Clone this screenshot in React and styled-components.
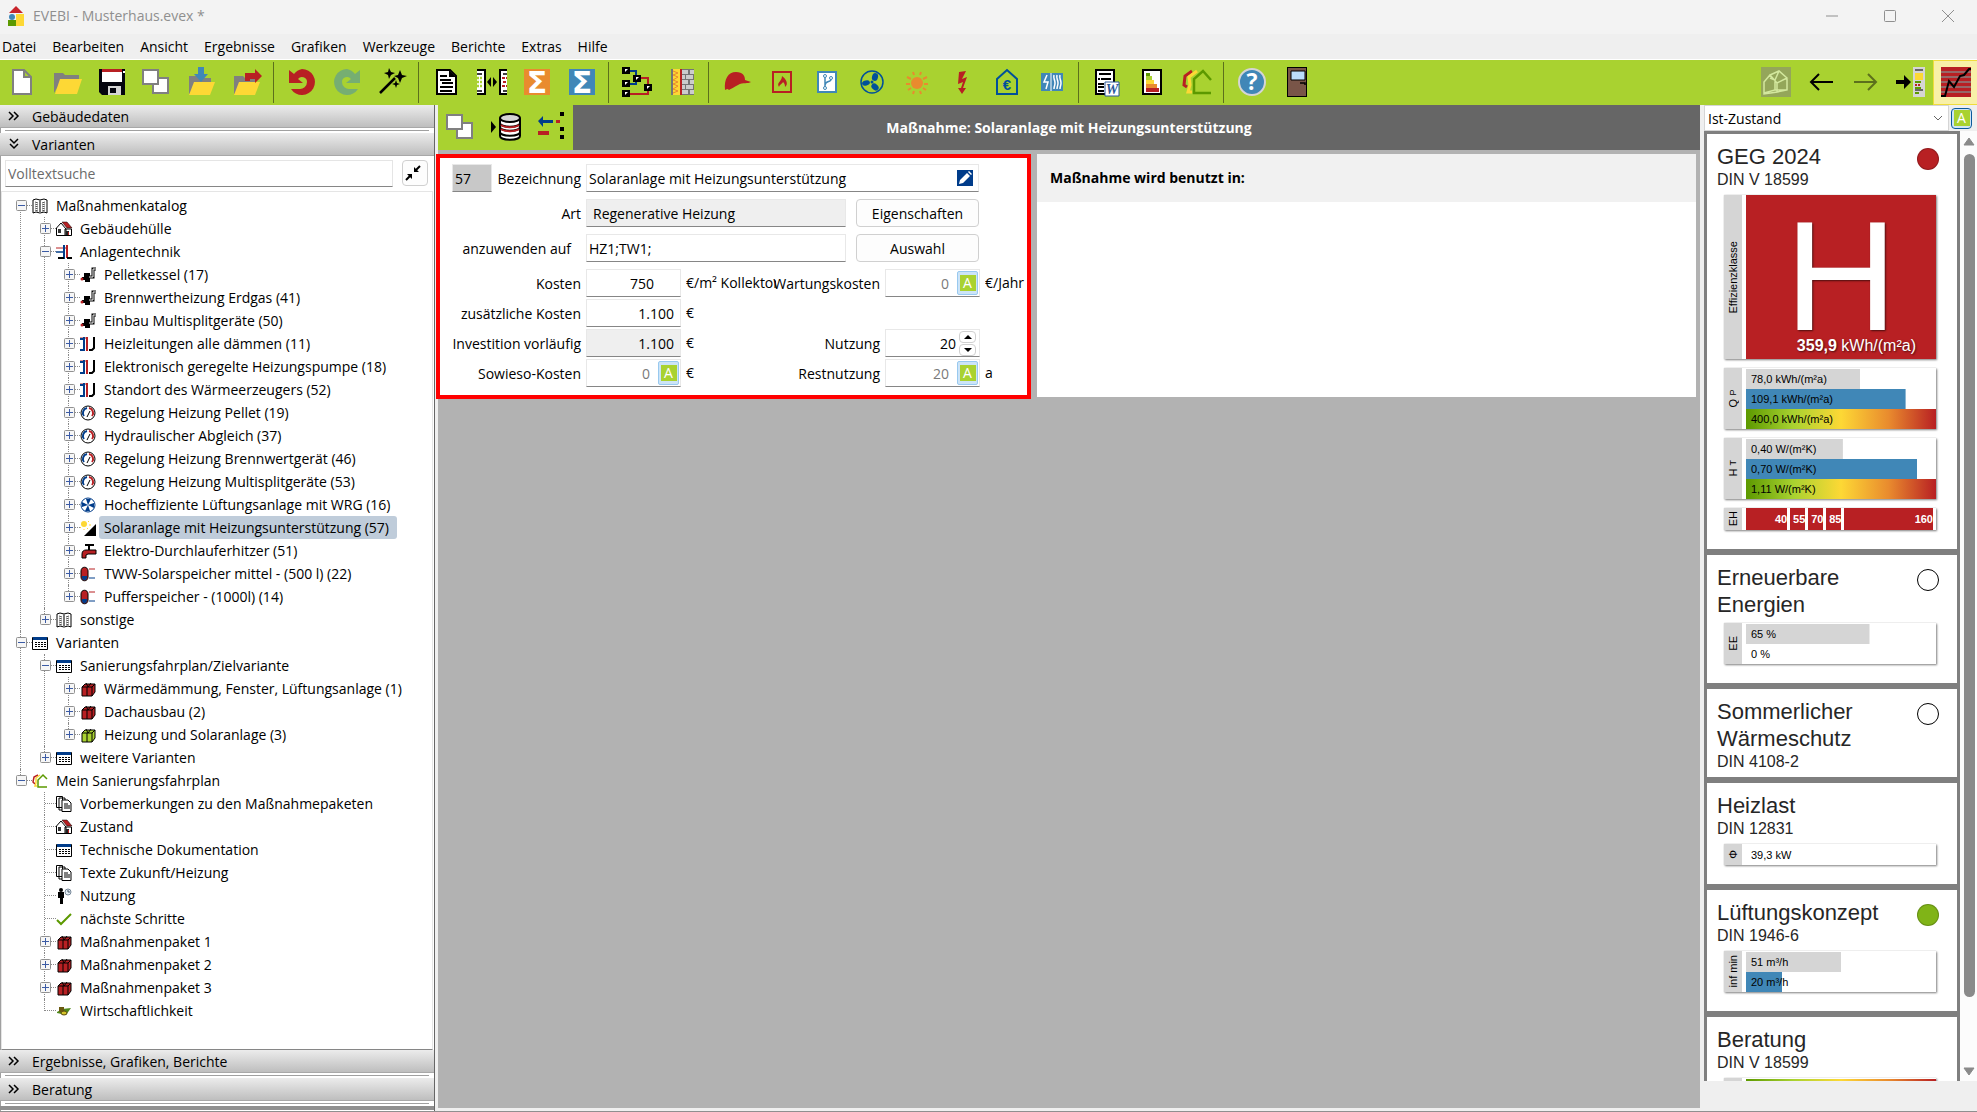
import { useState } from "react";
import styled, { createGlobalStyle, css } from "styled-components";

const green = "#a9d230";
const red = "#b82023";
const blue = "#4087b7";
const navy = "#003c8a";
const grey = "#b2b2b2";
const darkGrey = "#666666";
const yellow = "#fdd835";
const black = "#000000";
const white = "#ffffff";
const orange = "#e98b2e";

/* ---------- toolbar icons, 30 x 30 ---------- */

const toolIcons = {
  newFile: (
    <path d="M6 3h11l7 7v17H6z M17 3v7h7" fill={white} stroke="#808080" strokeWidth="2" />
  ),
  open: (
    <>
      <path d="M2 26V6h9l2 2h14v8H8z" fill="#808080" />
      <path d="M8 12h22l-5 15H3z" fill={yellow} />
    </>
  ),
  save: (
    <>
      <path d="M2 2h26v26H5l-3-3z" fill="#05050f" />
      <path d="M5 2h20v13H5z" fill={white} />
      <path d="M5 2h20v3H5z" fill={red} />
      <path d="M11 19h13v9H11z" fill="#d5d5d5" />
      <path d="M13 21h6v5h-6z" fill="#05050f" />
      <path d="M26 4h2v2h-2z" fill={white} />
    </>
  ),
  copies: (
    <g fill={white} stroke="#808080" strokeWidth="2">
      <path d="M11 11h15v15H11z" />
      <path d="M1 3h15v14H1z" />
    </g>
  ),
  importFile: (
    <>
      <path d="M2 27V9h9l2 2h11v8z" fill="#808080" />
      <path d="M7 15h21l-5 13H2z" fill={yellow} />
      <path d="M11 0h6v7h4l-7 8-7-8h4z" fill={blue} />
    </>
  ),
  exportFile: (
    <>
      <path d="M2 27V9h9l2 2h11v8z" fill="#808080" />
      <path d="M7 15h21l-5 13H2z" fill={yellow} />
      <path d="M13 14V6h10V2l7 7-7 7v-4h-5v2z" fill={red} />
    </>
  ),
  undo: (
    <path d="M15 2a13 13 0 1 1-11 20h8a7 7 0 0 0 8-7 5 5 0 0 0-9-3l5 4H2V3l5 4a13 13 0 0 1 8-5z" fill={red} />
  ),
  redo: (
    <path d="M15 2a13 13 0 1 0 11 20h-8a7 7 0 0 1-8-7 5 5 0 0 1 9-3l-5 4h14V3l-5 4a13 13 0 0 0-8-5z" fill="#76ae72" />
  ),
  wand: (
    <>
      <path d="M3 26l15-15" stroke={black} strokeWidth="2.500" />
      <path d="M12 1l2 4 4 1-4 2-2 4-1-4-4-2 4-1zM23 3l2 5 5 1-5 2-2 5-2-5-4-2 4-1zM19 13l1 3 3 1-3 1-1 3-1-3-3-1 3-1z" />
    </>
  ),
  doc: (
    <>
      <path d="M5 3h13l6 6v18H5z" fill={white} stroke={black} strokeWidth="2" />
      <path d="M17 3v7h7z" />
      <path d="M8 9h7M8 13h11M10 16h11M8 20h13M8 24h12" stroke={black} strokeWidth="2" />
    </>
  ),
  compare: (
    <>
      <path d="M0 3h8v24H0z M22 3h8v24h-8z" fill={white} />
      <path d="M0 3h8v24H0 M30 3h-7v24h7" fill="none" stroke={black} strokeWidth="2" />
      <path d="M10 15l4-5v10zM20 15l-4-5v10z" />
      <path d="M0 7h5M0 24h5M26 7h4M26 24h4" stroke={black} strokeWidth="1.500" />
      <path d="M0 11h5M0 15h5M0 19h5" stroke={green} strokeWidth="2.500" strokeDasharray="2 1" />
      <path d="M25 11h5M26 15h4M25 19h5" stroke={red} strokeWidth="2" strokeDasharray="3 1" />
    </>
  ),
  sumOrange: (
    <>
      <path d="M2 2h26v26H2z" fill={orange} />
      <text x="15" y="26" textAnchor="middle" fontFamily="DejaVu Sans" fontWeight="bold" fontSize="30" fill={white}>Σ</text>
    </>
  ),
  sumBlue: (
    <>
      <path d="M2 2h26v26H2z" fill={blue} />
      <text x="15" y="26" textAnchor="middle" fontFamily="DejaVu Sans" fontWeight="bold" fontSize="30" fill={white}>Σ</text>
    </>
  ),
  schema: (
    <>
      <path d="M7 4h7v5M7 17h7v-5" fill="none" stroke={navy} strokeWidth="2" />
      <path d="M18 11h8v16H7" fill="none" stroke={red} strokeWidth="2" />
      {[[0, 0], [0, 13], [0, 23], [11, 8], [22, 17]].map(([x, y]) => (
        <g key={`${x}-${y}`}>
          <path d={`M${x} ${y}h8v7h-8z`} />
          <path d={`M${x + 3} ${y + 2}h3l-3 3z`} fill={white} />
        </g>
      ))}
    </>
  ),
  wall: (
    <>
      <path d="M4 2h23v26H4z" fill="#757575" />
      <path d="M15 3h6v4h-6zM23 3h4v4h-4zM15 8h3v4h-3zM19 8h7v4h-7zM15 13h6v4h-6zM23 13h4v4h-4zM15 18h3v4h-3zM19 18h7v4h-7zM15 23h6v4h-6zM23 23h4v4h-4z" fill="#cccccc" />
      <path d="M6 2h7v26H6z" fill={yellow} />
      <path d="M6 4l5 2-5 2 5 2-5 3 5 2-5 2 5 2-5 3 5 2-5 2" fill="none" stroke={orange} />
      <path d="M13 2h2v26h-2z" fill={red} />
    </>
  ),
  cap: (
    <path d="M3 23C2 12 6 5 14 5c7 0 9 4 9 8l6 2c-3 2-8 0-13 3-4 2-7 4-9 5-2-2-3 0-4 0z" fill={red} />
  ),
  flame: (
    <>
      <path d="M6 5h18v20H6z" fill="none" stroke={red} strokeWidth="2" />
      <path d="M12 20c-3-5 3-5 3-11 4 3 7 8 3 11 0-3-1-4-2-5-1 2-3 2-4 5z" fill={red} />
    </>
  ),
  pipe: (
    <>
      <path d="M6 5h18v20H6z" fill={white} stroke={blue} strokeWidth="2" />
      <path d="M13 20V10M13 18c1-5 6-2 6-6" fill="none" stroke={blue} strokeWidth="1.500" />
      <circle cx="13" cy="9" r="1.500" fill={white} stroke={blue} />
      <circle cx="19" cy="11" r="1.500" fill={white} stroke={blue} />
      <circle cx="13" cy="21" r="1.500" fill={white} stroke={blue} />
    </>
  ),
  fan: (
    <g fill="#00509a">
      <circle cx="15" cy="15" r="11" fill="none" stroke="#00509a" strokeWidth="1.500" />
      <circle cx="15" cy="15" r="1.500" />
      <ellipse cx="18" cy="10" rx="3" ry="4" transform="rotate(15 18 10)" />
      <ellipse cx="9" cy="16" rx="4" ry="2.500" transform="rotate(-15 9 16)" />
      <ellipse cx="18" cy="20" rx="3" ry="4" transform="rotate(-50 18 20)" />
    </g>
  ),
  sun: (
    <>
      <circle cx="15" cy="16" r="6" fill={orange} />
      <g stroke={orange} strokeWidth="2">
        <path d="M11 5l1 3M19 5l-1 3M5 10l4 2M25 10l-4 2M4 17h4M26 17h-4M6 23l3-2M24 23l-3-2M11 27l1-3M19 27l-1-3" />
      </g>
    </>
  ),
  bolt: <path d="M12 5l7-1-4 8 5-2-4 11h3l-4 6-4-6h3l2-6-5 2z" fill={red} />,
  euroHouse: (
    <>
      <path d="M5 27V12L15 3l10 9v15z" fill="none" stroke="#00509a" strokeWidth="2" />
      <text x="15" y="23" textAnchor="middle" fontFamily="Liberation Sans" fontWeight="bold" fontSize="15" fill="#00509a">€</text>
    </>
  ),
  heating: (
    <>
      <path d="M4 6h22v18H4z" fill={blue} />
      <path d="M10 8l-3 7h4l-2 7" fill="none" stroke={white} strokeWidth="1.500" />
      <path d="M14 6v18" stroke={white} />
      <path d="M17 8c-1 4 1 4 1 8 0 3-1 3-1 6M20 8c-1 4 1 4 1 8 0 3-1 3-1 6M23 8c-1 4 1 4 1 8 0 3-1 3-1 6" fill="none" stroke={white} strokeWidth="1.500" />
    </>
  ),
  word: (
    <>
      <path d="M4 3h18v24H4z" fill={white} stroke={black} strokeWidth="2" />
      <path d="M7 7h12M6 12h2M9 12h10M6 17h6M6 20h6M6 24h6" stroke={black} strokeWidth="2" />
      <path d="M13 15h14v14H13z" fill={white} stroke="#2b579a" />
      <text x="20" y="27" textAnchor="middle" fontFamily="Liberation Serif" fontStyle="italic" fontWeight="bold" fontSize="14" fill="#2b579a">W</text>
    </>
  ),
  energyPass: (
    <>
      <path d="M6 3h18v24H6z" fill={white} stroke={black} strokeWidth="2" />
      <path d="M9 6h4v3H9z" fill="#5c9900" />
      <path d="M9 9h6v4H9z" fill={green} />
      <path d="M9 13h8v4H9z" fill={yellow} />
      <path d="M9 17h11v4H9z" fill={orange} />
      <path d="M9 21h13v4H9z" fill={red} />
    </>
  ),
  houses: (
    <g fill="none" strokeWidth="3">
      <path d="M10 4L3 9 2 18l3 2" stroke={red} />
      <path d="M15 4L7 10l1 8-2 7h4" stroke={yellow} />
      <path d="M29 13l-8-9-9 8v14h17" stroke="#5c9900" strokeWidth="2.500" />
    </g>
  ),
  help: (
    <>
      <circle cx="15" cy="15" r="13" fill={blue} stroke="#d5d5d5" strokeWidth="2" />
      <text x="15" y="23" textAnchor="middle" fontFamily="Open Sans" fontWeight="bold" fontSize="23" fill={white}>?</text>
    </>
  ),
  door: (
    <>
      <path d="M5 0h20v30H5z" />
      <path d="M6 1h18v28H6z" fill="#795548" />
      <path d="M9 4h14v9H9z" fill="#bbdefb" stroke={black} />
      <path d="M18 16h5v2" fill="none" stroke={black} strokeWidth="1.500" />
    </>
  ),
  model: (
    <>
      <path d="M0 0h30v30H0z" fill="#94a65a" />
      <path d="M3 15l6-7 7 8v9l-13 2zM9 8l9-4 8 7-10 5M26 11v12l-10 2M14 13v10l-11 3M14 23l12 0M14 13l4-9M9 11l5 2" fill="none" stroke="#d3e89e" strokeWidth="1.500" />
    </>
  ),
  back: <path d="M27 15H5M13 7l-8 8 8 8" fill="none" stroke={black} strokeWidth="2" />,
  forward: <path d="M3 15h22M17 7l8 8-8 8" fill="none" stroke="#5c701c" strokeWidth="2" />,
  dock: (
    <>
      <path d="M0 13h8V8l7 7-7 7v-5H0z" />
      <path d="M17 0h12v30H17z" fill="#d5d5d5" />
      <path d="M19 2h8v2h-8zM19 22h8v2h-8z" fill="#666" />
      <path d="M19 6h8v7h-8z" fill={yellow} />
      <path d="M19 14h6v2h-6zM19 20h6v2h-6zM19 25h4v2h-4z" fill="#5c9900" />
      <path d="M19 17h2v2h-2zM22 17h2v2h-2z" fill={red} />
    </>
  ),
  chart: (
    <>
      <path d="M0 0h30v30H0z" fill={red} />
      <path d="M0 5h30M0 10h30M0 15h30M0 20h30M0 25h30" stroke="#8a8080" strokeWidth="1.500" />
      <path d="M0 29h4l4-15 5 6 6-11 4-1 5-6h2" fill="none" stroke={black} strokeWidth="2" />
    </>
  ),
  database: (
    <>
      <path d="M0 9l5 6-5 6z" />
      <path d="M9 6v18c0 5 20 5 20 0V6z" fill={white} />
      <ellipse cx="19" cy="6" rx="10" ry="4" fill="#d5d5d5" stroke={black} strokeWidth="2" />
      <path d="M9 6v18c0 5 20 5 20 0V6M9 11c0 5 20 5 20 0M9 15c0 5 20 5 20 0M9 20c0 5 20 5 20 0" fill="none" stroke={black} strokeWidth="2" />
      <path d="M10 13c4 3 14 3 18 0M10 17c4 3 14 3 18 0" fill="none" stroke={red} strokeWidth="2" />
    </>
  ),
  assign: (
    <>
      <path d="M2 9l5-5v4h10v3H7v4z" fill={navy} />
      <path d="M20 8h4v3h-4zM2 19h11v4H2z" fill={red} />
      <path d="M24 0h4v4h-4zM24 15h4v4h-4zM24 23h4v4h-4z" />
    </>
  ),
};

/* ---------- tree icons, 16 x 16 ---------- */

const treeIcons = {
  book: (
    <>
      <path d="M1 2l3-1 4 1 4-1 3 1v13l-3-1-4 1-4-1-3 1z" fill={white} stroke={black} />
      <path d="M3 4l3 1M3 6l3 1M3 8l3 1M3 10l3 1M3 12l3 1M13 4l-3 1M13 6l-3 1M13 8l-3 1M13 10l-3 1M13 12l-3 1" stroke="#555" />
      <path d="M8 2v13" stroke="#777" strokeWidth="2" />
    </>
  ),
  house: (
    <>
      <path d="M0.500 7L5 2l5 6v6.500H0.500zM9 8h6.500v6.500H9z" fill={white} stroke={black} />
      <path d="M6 1h5l5 6h-5z" fill={red} stroke={black} strokeWidth="0.500" />
      <path d="M2 8h3v4H2z" fill="#333" />
      <path d="M10 10h3v4h-3z" fill="#222" />
      <path d="M12 11h1v3h-1z" fill={red} />
    </>
  ),
  plant: (
    <>
      <path d="M0 4h11" stroke={red} />
      <path d="M0 8h8" stroke={navy} strokeWidth="1.500" />
      <path d="M8 1v14" stroke={navy} strokeWidth="2" />
      <path d="M11 1v13" stroke={red} strokeWidth="2" />
      <path d="M2 14h6M11 14h5" stroke={black} strokeWidth="2" />
    </>
  ),
  boiler: (
    <>
      <path d="M4 6h6v9H5v-2H2v-3h2z" />
      <circle cx="2" cy="12" r="1.500" fill={red} />
      <path d="M9 10h4V2h3" fill="none" stroke={black} strokeWidth="3" />
      <path d="M9 10h4V2h3" fill="none" stroke={white} />
    </>
  ),
  pipes: (
    <>
      <path d="M0 2h6" stroke={red} />
      <path d="M0 3h4M0 14h4" stroke={navy} strokeWidth="2" />
      <path d="M4 1v14" stroke={navy} strokeWidth="2" />
      <path d="M7 1v14" stroke={red} strokeWidth="2" />
      <path d="M14 1v11l-2 2h-3" fill="none" stroke={black} strokeWidth="2" />
    </>
  ),
  gauge: (
    <>
      <circle cx="8" cy="8" r="7" fill={white} stroke={black} />
      <path d="M4 11a5 5 0 0 1 3-8" fill="none" stroke={navy} strokeWidth="2" />
      <path d="M9 3a5 5 0 0 1 3 8" fill="none" stroke={red} strokeWidth="2" />
      <path d="M7 12l3-6" stroke={black} />
    </>
  ),
  fan: (
    <>
      <circle cx="8" cy="8" r="7" fill={white} stroke={navy} />
      <path d="M8 8L6 2h5zM8 8l6-2v5zM8 8l2 6H5zM8 8l-6 2V5z" fill={navy} />
    </>
  ),
  solar: (
    <>
      <circle cx="4" cy="4" r="3" fill={yellow} />
      <path d="M8 2l1-1M9 5h2M7 8l1 1M4 9v1M0 8l1-1" stroke={yellow} />
      <path d="M16 4v12H4z" />
    </>
  ),
  tap: (
    <>
      <path d="M2 15v-4c0-3 2-4 4-4h10v4H8l-2 1v3z" fill={red} stroke={black} />
      <path d="M5 2h9M9 2v5" stroke={black} strokeWidth="2" />
    </>
  ),
  tank: (
    <>
      <path d="M1 5c0-5 7-5 7 0v6c0 5-7 5-7 0z" fill={red} stroke={black} />
      <path d="M2 10h5v2c-1 3-4 3-5 0z" fill={navy} />
      <path d="M9 3h6" stroke={red} />
      <path d="M9 12h6" stroke={navy} />
    </>
  ),
  grid: (
    <>
      <path d="M0.500 2.500h15v12h-15z" fill={white} stroke={black} />
      <path d="M1 2h14v3H1z" fill={navy} />
      <path d="M3 7.500h11M3 9.500h11M3 11.500h11" stroke={black} strokeDasharray="2 1" />
    </>
  ),
  packageRed: (
    <>
      <path d="M2 6l3-3h10v8l-3 4H2z" fill={red} stroke={black} />
      <path d="M2 6h10v9M12 6l3-3M7 6v9M6 2l2 4 3-4" fill="none" stroke={black} />
    </>
  ),
  packageGreen: (
    <>
      <path d="M2 6l3-3h10v8l-3 4H2z" fill={green} stroke={black} />
      <path d="M2 6h10v9M12 6l3-3M7 6v9M6 2l2 4 3-4" fill="none" stroke={black} />
    </>
  ),
  roadmap: (
    <g fill="none" strokeWidth="1.500">
      <path d="M6 2L2 4 1 9l2 2" stroke={red} />
      <path d="M8 2L4 5v5l-1 3h2" stroke={yellow} />
      <path d="M15 6l-4-4-5 5v7h9" stroke="#5c9900" />
    </g>
  ),
  pages: (
    <g fill={white} stroke={black}>
      <path d="M0.500 0.500h6v11h-6zM3 2h6v12H3z" />
      <path d="M6 4h6l3 3v8.500H6z" />
      <path d="M8 8h4M8 10h6M8 12h6" />
    </g>
  ),
  person: (
    <>
      <circle cx="5" cy="2" r="2" />
      <path d="M2 4h6v6H7v6H4v-6H2z" />
      <circle cx="12" cy="4" r="3" fill="#e3edf3" stroke="#789" />
      <path d="M11 3h2v2" fill="none" stroke="#456" />
    </>
  ),
  check: <path d="M1 9l4 4L15 3" fill="none" stroke="#5c9900" strokeWidth="2" />,
  money: (
    <>
      <path d="M1 9l5-3 9-1-5 7-9-2z" fill="#4f8a1c" />
      <path d="M3 4h5v5H3z" fill="#6b5a10" />
      <ellipse cx="8" cy="10" rx="3" ry="2" fill="#d6c52b" stroke="#5a4a10" />
    </>
  ),
};

const catalogue = [
  { label: "Maßnahmenkatalog", icon: "book", children: [
    { label: "Gebäudehülle", icon: "house", closed: true },
    { label: "Anlagentechnik", icon: "plant", children: [
      { label: "Pelletkessel (17)", icon: "boiler", closed: true },
      { label: "Brennwertheizung Erdgas (41)", icon: "boiler", closed: true },
      { label: "Einbau Multisplitgeräte (50)", icon: "boiler", closed: true },
      { label: "Heizleitungen alle dämmen (11)", icon: "pipes", closed: true },
      { label: "Elektronisch geregelte Heizungspumpe (18)", icon: "pipes", closed: true },
      { label: "Standort des Wärmeerzeugers (52)", icon: "pipes", closed: true },
      { label: "Regelung Heizung Pellet (19)", icon: "gauge", closed: true },
      { label: "Hydraulischer Abgleich (37)", icon: "gauge", closed: true },
      { label: "Regelung Heizung Brennwertgerät (46)", icon: "gauge", closed: true },
      { label: "Regelung Heizung Multisplitgeräte (53)", icon: "gauge", closed: true },
      { label: "Hocheffiziente Lüftungsanlage mit WRG (16)", icon: "fan", closed: true },
      { label: "Solaranlage mit Heizungsunterstützung (57)", icon: "solar", closed: true },
      { label: "Elektro-Durchlauferhitzer (51)", icon: "tap", closed: true },
      { label: "TWW-Solarspeicher mittel - (500 l) (22)", icon: "tank", closed: true },
      { label: "Pufferspeicher - (1000l) (14)", icon: "tank", closed: true },
    ] },
    { label: "sonstige", icon: "book", closed: true },
  ] },
  { label: "Varianten", icon: "grid", children: [
    { label: "Sanierungsfahrplan/Zielvariante", icon: "grid", children: [
      { label: "Wärmedämmung, Fenster, Lüftungsanlage (1)", icon: "packageRed", closed: true },
      { label: "Dachausbau (2)", icon: "packageRed", closed: true },
      { label: "Heizung und Solaranlage (3)", icon: "packageGreen", closed: true },
    ] },
    { label: "weitere Varianten", icon: "grid", closed: true },
  ] },
  { label: "Mein Sanierungsfahrplan", icon: "roadmap", children: [
    { label: "Vorbemerkungen zu den Maßnahmepaketen", icon: "pages" },
    { label: "Zustand", icon: "house" },
    { label: "Technische Dokumentation", icon: "grid" },
    { label: "Texte Zukunft/Heizung", icon: "pages" },
    { label: "Nutzung", icon: "person" },
    { label: "nächste Schritte", icon: "check" },
    { label: "Maßnahmenpaket 1", icon: "packageRed", closed: true },
    { label: "Maßnahmenpaket 2", icon: "packageRed", closed: true },
    { label: "Maßnahmenpaket 3", icon: "packageRed", closed: true },
    { label: "Wirtschaftlichkeit", icon: "money" },
  ] },
];

const menu = ["Datei", "Bearbeiten", "Ansicht", "Ergebnisse", "Grafiken", "Werkzeuge", "Berichte", "Extras", "Hilfe"];

const toolGroups = [
  ["newFile", "open", "save", "copies", "importFile", "exportFile"],
  ["undo", "redo", "wand"],
  ["doc", "compare", "sumOrange", "sumBlue"],
  ["schema", "wall"],
  ["cap", "flame", "pipe", "fan", "sun", "bolt", "euroHouse", "heating"],
  ["word", "energyPass", "houses"],
  ["help", "door"],
];

const ToolIcon = ({ name }) => (
  <svg width="30" height="30" viewBox="0 0 30 30" aria-hidden="true">{toolIcons[name]}</svg>
);

const Chevrons = ({ down }) => (
  <svg width="12" height="12" viewBox="0 0 12 12" fill="none" stroke="#000" strokeWidth="1.500" aria-hidden="true">
    {down ? <path d="M2 1l4 4 4-4M2 6l4 4 4-4" /> : <path d="M1 2l4 4-4 4M6 2l4 4-4 4" />}
  </svg>
);

const TreeNode = ({ node, selected, onSelect }) => {
  const { label, icon, children, closed } = node;
  const [open, setOpen] = useState(!closed);

  return (
    <TreeItem>
      <TreeRow>
        {(children || closed) && (
          <Expander aria-label={open ? "Zuklappen" : "Aufklappen"} onClick={() => setOpen(!open)}>
            <svg width="11" height="11" viewBox="0 0 11 11">
              <rect x="0.500" y="0.500" width="10" height="10" rx="1" fill="#f6f6f6" stroke="#919191" />
              <path d={open ? "M2 5.500h7" : "M2 5.500h7M5.500 2v7"} stroke="#3b5ba5" />
            </svg>
          </Expander>
        )}
        <svg width="16" height="16" viewBox="0 0 16 16" aria-hidden="true">{treeIcons[icon]}</svg>
        <TreeLabel $selected={selected === label} onClick={() => onSelect(label)}>{label}</TreeLabel>
      </TreeRow>
      {open && children && (
        <TreeList>
          {children.map((child) => (
            <TreeNode key={child.label} node={child} selected={selected} onSelect={onSelect} />
          ))}
        </TreeList>
      )}
    </TreeItem>
  );
};

const Sidebar = () => {
  const [selected, setSelected] = useState("Solaranlage mit Heizungsunterstützung (57)");

  return (
    <Side>
      <Section><Chevrons />Gebäudedaten</Section>
      <Divider />
      <Section><Chevrons down />Varianten</Section>
      <SearchRow>
        <Search type="text" placeholder="Volltextsuche" aria-label="Volltextsuche" />
        <CollapseButton aria-label="Alle zuklappen">
          <svg width="16" height="16" viewBox="0 0 16 16" stroke="#000" strokeWidth="2">
            <path d="M15 1l-4 4M1 15l4-4" />
            <path d="M9 2v5h5zM2 9h5v5z" stroke="none" />
          </svg>
        </CollapseButton>
      </SearchRow>
      <Tree>
        <TreeList $root>
          {catalogue.map((node) => (
            <TreeNode key={node.label} node={node} selected={selected} onSelect={setSelected} />
          ))}
        </TreeList>
      </Tree>
      <Section><Chevrons />Ergebnisse, Grafiken, Berichte</Section>
      <Divider />
      <Section><Chevrons />Beratung</Section>
      <Divider />
      <SideFoot />
    </Side>
  );
};

const Auto = () => <AutoButton aria-label="Automatisch"><span>A</span></AutoButton>;

const MeasureForm = () => (
  <FormPanel>
    <FormGrid>
      <NumberedLabel>
        <Field $fill="#c8c8c8" $width="40px">
          <input aria-label="Nummer" defaultValue="57" readOnly />
        </Field>
        <Label htmlFor="name">Bezeichnung</Label>
      </NumberedLabel>
      <Field $span>
        <input id="name" defaultValue="Solaranlage mit Heizungsunterstützung" />
        <EditButton aria-label="Bezeichnung bearbeiten">
          <svg width="16" height="16" viewBox="0 0 16 16">
            <path d="M0 0h16v16H0z" fill={navy} />
            <path d="M2 14l1-4 7-7 3 3-7 7zM11 2l1-1 3 3-1 1z" fill={white} />
          </svg>
        </EditButton>
      </Field>

      <Label htmlFor="kind">Art</Label>
      <Field $fill="#efefef" $pad="6px"><input id="kind" defaultValue="Regenerative Heizung" readOnly /></Field>
      <PushButton>Eigenschaften</PushButton>

      <Label htmlFor="target" $inset>anzuwenden auf</Label>
      <Field><input id="target" defaultValue="HZ1;TW1;" /></Field>
      <PushButton>Auswahl</PushButton>
    </FormGrid>

    <CostGrid>
      <Label htmlFor="cost">Kosten</Label>
      <Field $right="26px"><input id="cost" defaultValue="750" /></Field>
      <Unit>€/m² Kollektor</Unit>
      <Label htmlFor="service">Wartungskosten</Label>
      <Field $right="8px" $muted><input id="service" defaultValue="0" /><Auto /></Field>
      <Unit>€/Jahr</Unit>

      <Label htmlFor="extra">zusätzliche Kosten</Label>
      <Field $right="6px"><input id="extra" defaultValue="1.100" /></Field>
      <Unit $wide>€</Unit>

      <Label htmlFor="invest">Investition vorläufig</Label>
      <Field $right="6px" $fill="#efefef"><input id="invest" defaultValue="1.100" readOnly /></Field>
      <Unit>€</Unit>
      <Label htmlFor="use">Nutzung</Label>
      <Field $right="3px">
        <input id="use" defaultValue="20" />
        <Spinner>
          <button aria-label="Erhöhen"><svg width="8" height="4" viewBox="0 0 8 4"><path d="M0 4l4-4 4 4z" /></svg></button>
          <button aria-label="Verringern"><svg width="8" height="4" viewBox="0 0 8 4"><path d="M0 0l4 4 4-4z" /></svg></button>
        </Spinner>
      </Field>
      <Unit />

      <Label htmlFor="anyway">Sowieso-Kosten</Label>
      <Field $right="8px" $muted><input id="anyway" defaultValue="0" /><Auto /></Field>
      <Unit>€</Unit>
      <Label htmlFor="rest">Restnutzung</Label>
      <Field $right="8px" $muted><input id="rest" defaultValue="20" /><Auto /></Field>
      <Unit>a</Unit>
    </CostGrid>
  </FormPanel>
);

const Chart = ({ label, small, bars }) => (
  <ChartBox>
    <ChartLabel><span>{label}{small && <small>{small}</small>}</span></ChartLabel>
    <Bars>
      {bars.map((bar) => (
        <Bar key={bar.text} $tone={bar.tone} style={{ "--share": `${bar.share}%` }}>{bar.text}</Bar>
      ))}
    </Bars>
  </ChartBox>
);

const Results = () => (
  <Cards>
    <Card>
      <CardHead><div><h2>GEG 2024</h2><p>DIN V 18599</p></div><Lamp $color={red} /></CardHead>
      <Charts>
        <ChartBox>
          <ChartLabel><span>Effizienzklasse</span></ChartLabel>
          <Rating>
            <RatingLetter>H</RatingLetter>
            <RatingValue><b>359,9</b> kWh/(m²a)</RatingValue>
          </Rating>
        </ChartBox>
        <Chart label="Q" small="P" bars={[
          { text: "78,0 kWh/(m²a)", share: 60, tone: "grey" },
          { text: "109,1 kWh/(m²a)", share: 84, tone: "blue" },
          { text: "400,0 kWh/(m²a)", share: 100, tone: "scale" },
        ]} />
        <Chart label="H" small="T" bars={[
          { text: "0,40 W/(m²K)", share: 51, tone: "grey" },
          { text: "0,70 W/(m²K)", share: 90, tone: "blue" },
          { text: "1,11 W/(m²K)", share: 100, tone: "scale" },
        ]} />
        <ChartBox>
          <ChartLabel><span>EH</span></ChartLabel>
          <Levels><b>40</b><b>55</b><b>70</b><b>85</b><b>160</b></Levels>
        </ChartBox>
      </Charts>
    </Card>
    <Card>
      <CardHead><div><h2>Erneuerbare Energien</h2></div><Lamp /></CardHead>
      <Charts>
        <Chart label="EE" bars={[
          { text: "65 %", share: 65, tone: "grey" },
          { text: "0 %", share: 0, tone: "blue" },
        ]} />
      </Charts>
    </Card>
    <Card>
      <CardHead><div><h2>Sommerlicher Wärmeschutz</h2><p>DIN 4108-2</p></div><Lamp /></CardHead>
    </Card>
    <Card>
      <CardHead><div><h2>Heizlast</h2><p>DIN 12831</p></div></CardHead>
      <Charts>
        <Chart label="Φ" bars={[{ text: "39,3 kW", share: 0, tone: "grey" }]} />
      </Charts>
    </Card>
    <Card>
      <CardHead><div><h2>Lüftungskonzept</h2><p>DIN 1946-6</p></div><Lamp $color="#80b417" /></CardHead>
      <Charts>
        <Chart label="inf min" bars={[
          { text: "51 m³/h", share: 50, tone: "grey" },
          { text: "20 m³/h", share: 19, tone: "blue" },
        ]} />
      </Charts>
    </Card>
    <Card>
      <CardHead><div><h2>Beratung</h2><p>DIN V 18599</p></div></CardHead>
      <Charts>
        <ChartBox>
          <ChartLabel />
          <Bars><Bar $tone="scale" style={{ "--share": "100%" }} /></Bars>
        </ChartBox>
      </Charts>
    </Card>
  </Cards>
);

const App = () => (
  <Window>
    <GlobalStyle />
    <TitleBar>
      <svg width="16" height="20" viewBox="0 0 16 20" aria-hidden="true">
        <path d="M8 0l7 7H1z" fill="#c8242b" />
        <path d="M8 8h8v12H8z" fill={yellow} />
        <circle cx="4" cy="11" r="3" fill={blue} />
        <path d="M0 14h8v6H0z" fill="#5c9900" />
      </svg>
      <Title>EVEBI - Musterhaus.evex *</Title>
      <WindowButton aria-label="Minimieren"><svg width="12" height="12"><path d="M0 6h12" /></svg></WindowButton>
      <WindowButton aria-label="Maximieren"><svg width="12" height="12"><rect x="0.500" y="0.500" width="11" height="11" rx="1" /></svg></WindowButton>
      <WindowButton aria-label="Schließen"><svg width="12" height="12"><path d="M0 0l12 12M12 0L0 12" /></svg></WindowButton>
    </TitleBar>
    <MenuBar>{menu.map((item) => <button key={item}>{item}</button>)}</MenuBar>
    <Toolbar>
      {toolGroups.map((group) => (
        <ToolGroup key={group[0]}>
          {group.map((name) => <Tool key={name} aria-label={name}><ToolIcon name={name} /></Tool>)}
        </ToolGroup>
      ))}
      <Spacer />
      <Tool aria-label="Modell"><ToolIcon name="model" /></Tool>
      <Tool aria-label="Zurück"><ToolIcon name="back" /></Tool>
      <Tool aria-label="Vor"><ToolIcon name="forward" /></Tool>
      <Tool aria-label="Andocken"><ToolIcon name="dock" /></Tool>
      <Tool aria-label="Diagramm" $active><ToolIcon name="chart" /></Tool>
    </Toolbar>
    <Body>
      <Sidebar />
      <Main>
        <MainHead>
          <MainTools>
            <Tool aria-label="Kopieren"><ToolIcon name="copies" /></Tool>
            <Tool aria-label="Datenbank"><ToolIcon name="database" /></Tool>
            <Tool aria-label="Zuordnen"><ToolIcon name="assign" /></Tool>
          </MainTools>
          <h1>Maßnahme: Solaranlage mit Heizungsunterstützung</h1>
        </MainHead>
        <Workspace>
          <MeasureForm />
          <UsagePanel><h2>Maßnahme wird benutzt in:</h2></UsagePanel>
        </Workspace>
      </Main>
      <Aside>
        <AsideHead>
          <SelectWrap>
            <select aria-label="Variante"><option>Ist-Zustand</option></select>
            <svg width="10" height="6" viewBox="0 0 10 6"><path d="M1 1l4 4 4-4" fill="none" stroke="#666" /></svg>
          </SelectWrap>
          <AutoButton $framed aria-label="Automatisch"><span>A</span></AutoButton>
        </AsideHead>
        <AsideBody>
          <Results />
          <ScrollTrack>
            <svg width="12" height="9" viewBox="0 0 12 9"><path d="M1 8l5-7 5 7z" fill="#8a8a8a" stroke="#8a8a8a" strokeLinejoin="round" /></svg>
            <ScrollThumb />
            <svg width="12" height="9" viewBox="0 0 12 9"><path d="M1 1l5 7 5-7z" fill="#8a8a8a" stroke="#8a8a8a" strokeLinejoin="round" /></svg>
          </ScrollTrack>
        </AsideBody>
      </Aside>
    </Body>
  </Window>
);

export default App;



const GlobalStyle = createGlobalStyle`
  * { box-sizing: border-box; }
  body { margin: 0; }
  body, button, input, select {
    font-family: "Open Sans", "Noto Sans", sans-serif;
    font-size: 14px;
    color: ${black};
  }
  button { padding: 0; border: 0; background: none; }
  h1, h2, p, ul { margin: 0; padding: 0; }
  svg { display: block; flex: none; overflow: visible; }
`;

const Window = styled.div`
  display: flex;
  flex-direction: column;
  height: 100vh;
  overflow: hidden;
  background: #efefef;
  border-bottom: 1px solid #8f8f8f;
`;

const TitleBar = styled.header`
  display: flex;
  align-items: center;
  height: 34px;
  padding: 0 0 3px 8px;
  background: #f3f3f3;
`;

const Title = styled.span`
  flex: 1;
  padding-left: 9px;
  color: #8f8f8f;
`;

const WindowButton = styled.button`
  display: flex;
  justify-content: center;
  width: 58px;

  svg {
    fill: none;
    stroke: #8f8f8f;
  }
`;

const MenuBar = styled.nav`
  display: flex;
  gap: 16px;
  height: 26px;
  padding: 0 2px;
  border-bottom: 1px solid ${white};
`;

const Toolbar = styled.div`
  display: flex;
  flex: none;
  height: 45px;
  margin: 0 -1px;
  background: ${green};
`;

const ToolGroup = styled.div`
  display: flex;

  & + & {
    margin-left: 2px;
    padding-left: 8px;
    background: linear-gradient(#5c701c, #5c701c) 2px 2px / 1px 41px no-repeat;
  }
`;

const Tool = styled.button`
  display: flex;
  align-items: center;
  justify-content: center;
  width: 45px;
  height: 45px;
  padding-bottom: 1px;
  ${(p) => p.$active && css`
    background: #f8f0a8;
    border: 1px solid #f0dc3c;
  `}
`;

const Spacer = styled.div`
  flex: 1;
`;

const Body = styled.div`
  display: flex;
  flex: 1;
  min-height: 0;
`;

/* sidebar */

const Side = styled.aside`
  display: flex;
  flex-direction: column;
  width: 435px;
  background: ${white};
  border-right: 1px solid ${darkGrey};
  box-shadow: inset 1px 0 #a0a0a0;
`;

const Section = styled.button`
  display: flex;
  align-items: center;
  gap: 12px;
  flex: none;
  height: 23px;
  padding: 0 8px;
  background: linear-gradient(#ececec, #bebebe);
  border-bottom: 1px solid #a8a8a8;
`;

const Divider = styled.hr`
  flex: none;
  width: calc(100% - 10px);
  height: 1px;
  margin: 2px 5px;
  border: 0;
  background: #a0a0a0;
`;

const SearchRow = styled.div`
  display: flex;
  gap: 9px;
  padding: 4px 6px 4px 5px;
`;

const Search = styled.input`
  flex: 1;
  height: 27px;
  padding: 0 2px;
  border: 1px solid #e5e5e5;
  border-bottom-color: #868686;

  &::placeholder {
    color: #6b6b6b;
  }
`;

const CollapseButton = styled.button`
  display: flex;
  align-items: center;
  padding: 0 2px;
  width: 26px;
  height: 26px;
  background: #fdfdfd;
  border: 1px solid #d0d0d0;
  border-radius: 4px;
`;

const Tree = styled.div`
  flex: 1;
  min-height: 0;
  margin: 0 1px;
  padding-top: 2px;
  overflow: hidden;
  border: 1px solid #e5e5e5;
  border-bottom-color: #868686;
`;

const TreeItem = styled.li`
  position: relative;
  list-style: none;

  &::before {
    content: "";
    position: absolute;
    left: 12px;
    top: 0;
    bottom: 0;
    border-left: 1px dotted #8a8a8a;
  }

  &:last-child::before {
    bottom: auto;
    height: 12px;
  }
`;

const TreeList = styled.ul`
  padding-left: ${(p) => (p.$root ? "6px" : "24px")};

  ${(p) => p.$root && css`
    & > ${TreeItem}:first-child::before {
      top: 12px;
    }
  `}
`;

const TreeRow = styled.div`
  position: relative;
  display: flex;
  align-items: center;
  gap: 3px;
  height: 23px;
  padding-left: 24px;

  &::before {
    content: "";
    position: absolute;
    left: 13px;
    width: 11px;
    top: 11px;
    border-top: 1px dotted #8a8a8a;
  }
`;

/* sits over the dotted guide line */
const Expander = styled.button`
  position: absolute;
  left: 8px;
  top: 6px;
`;

const TreeLabel = styled.button`
  height: 23px;
  padding: 0 8px 0 5px;
  border-radius: 3px;
  white-space: nowrap;
  background: ${(p) => (p.$selected ? "#bfccda" : "transparent")};
`;

const SideFoot = styled.div`
  flex: none;
  height: 4px;
  margin-bottom: 1px;
  background: #8f8f8f;
`;

/* main area */

const Main = styled.main`
  display: flex;
  flex: 1;
  flex-direction: column;
  min-width: 0;
  margin: 0 4px 3px 3px;
  background: ${grey};
`;

const MainHead = styled.div`
  display: flex;
  align-items: center;
  height: 45px;
  background: ${darkGrey};

  h1 {
    flex: 1;
    padding-right: 135px;
    font-size: 14px;
    text-align: center;
    color: ${white};
  }
`;

const MainTools = styled.div`
  display: flex;
  background: ${green};
`;

const Workspace = styled.div`
  display: flex;
  gap: 10px;
  padding: 4px 4px 0 2px;
`;

const FormPanel = styled.form`
  display: flex;
  flex-direction: column;
  gap: 7px;
  width: 587px;
  margin: 4px 0;
  padding: 6px 0 8px 12px;
  background: ${white};
  outline: 4px solid #ff0000;
`;

const FormGrid = styled.div`
  display: grid;
  grid-template-columns: 129px 260px 123px;
  grid-auto-rows: 28px;
  gap: 7px 5px;
`;

const CostGrid = styled.div`
  display: grid;
  grid-template-columns: 129px 95px 90px 99px 95px 41px;
  gap: 2px 5px;
`;

const Label = styled.label`
  display: flex;
  align-items: center;
  justify-content: flex-end;
  height: 28px;
  padding-right: ${(p) => (p.$inset ? "10px" : "0")};
  white-space: nowrap;
`;

const NumberedLabel = styled.div`
  display: flex;
  justify-content: space-between;
`;

const Field = styled.div`
  display: flex;
  align-items: center;
  height: 28px;
  width: ${(p) => p.$width || "auto"};
  background: ${(p) => p.$fill || white};
  border: 1px solid #e8e8e8;
  border-bottom-color: #868686;
  ${(p) => p.$span && css`
    grid-column: span 2;
    margin-right: -5px;
  `}

  input {
    flex: 1;
    width: 100%;
    min-width: 0;
    height: 26px;
    padding: 0 ${(p) => p.$right || "0"} 0 ${(p) => p.$pad || "2px"};
    border: 0;
    background: none;
    color: ${(p) => (p.$muted ? "#7a7a7a" : black)};
    text-align: ${(p) => (p.$right ? "right" : "left")};
  }
`;

const EditButton = styled.button`
  padding-right: 5px;
`;

const PushButton = styled.button`
  margin: 0 -5px 0 5px;
  background: #fdfdfd;
  border: 1px solid #d0d0d0;
  border-radius: 4px;
`;

const Unit = styled.span`
  height: 28px;
  line-height: 28px;
  overflow: hidden;
  white-space: nowrap;
  ${(p) => p.$wide && css`grid-column: span 4;`}
`;

const AutoButton = styled.button`
  display: flex;
  align-items: center;
  justify-content: center;
  flex: none;
  width: 21px;
  height: ${(p) => (p.$framed ? "21px" : "24px")};
  margin-right: 1px;
  background: #cce4f7;
  border: 1px solid ${(p) => (p.$framed ? "#0a5a9c" : "#99c9ef")};
  border-radius: ${(p) => (p.$framed ? "4px" : "2px")};

  span {
    width: 16px;
    height: 16px;
    line-height: 16px;
    color: ${white};
    background: ${green};
  }
`;

const Spinner = styled.div`
  display: flex;
  flex-direction: column;
  gap: 1px;
  padding-right: 3px;

  button {
    display: flex;
    align-items: center;
    justify-content: center;
    width: 17px;
    height: 12px;
    border: 1px solid #d0d0d0;
    border-radius: 4px;
  }
`;

const UsagePanel = styled.section`
  flex: 1;
  margin-bottom: 2px;
  background: ${white};

  h2 {
    padding: 0 13px;
    line-height: 48px;
    font-size: 14px;
    background: #f1f1f1;
  }
`;

/* results column */

const Aside = styled.aside`
  display: flex;
  flex-direction: column;
  width: 273px;
  padding-bottom: 30px;
`;

const AsideHead = styled.div`
  display: flex;
  align-items: center;
  gap: 2px;
  height: 26px;
`;

const SelectWrap = styled.div`
  display: flex;
  align-items: center;
  width: 245px;
  height: 26px;
  padding-right: 5px;
  background: ${white};
  border: 1px solid #d5d5d5;

  select {
    flex: 1;
    padding: 0 3px;
    border: 0;
    background: none;
    appearance: none;
  }
`;

const AsideBody = styled.div`
  display: flex;
  flex: 1;
  min-height: 0;
`;

const Cards = styled.div`
  display: flex;
  flex: 1;
  flex-direction: column;
  gap: 6px;
  overflow: hidden;
  padding: 3px 3px 0;
  background: #7f7f7f;
  font-family: "Liberation Sans", sans-serif;
`;

const Card = styled.section`
  flex: none;
  background: ${white};
`;

const CardHead = styled.div`
  display: flex;
  justify-content: space-between;
  padding: 9px 18px 5px 10px;
  color: #262626;

  h2 {
    font-size: 22px;
    font-weight: normal;
    line-height: 27px;
  }

  p {
    font-size: 16px;
    line-height: 20px;
  }
`;

const Lamp = styled.span`
  flex: none;
  width: 22px;
  height: 22px;
  margin-top: 5px;
  border: 1px solid ${(p) => (p.$color ? "rgba(0, 0, 0, 0.2)" : black)};
  border-radius: 50%;
  background: ${(p) => p.$color || white};
`;

const Charts = styled.div`
  display: flex;
  flex-direction: column;
  gap: 9px;
  padding: 0 21px 19px 17px;
`;

const ChartBox = styled.div`
  display: flex;
  gap: 4px;
  background: ${white};
  box-shadow: 1px 1px 2px #808080, 0 0 1px #cccccc;
  font-size: 11px;
`;

const ChartLabel = styled.div`
  display: flex;
  align-items: center;
  justify-content: center;
  flex: none;
  width: 18px;
  background: #d5d5d5;

  span {
    writing-mode: vertical-rl;
    transform: rotate(180deg);
    white-space: nowrap;
  }

  small {
    padding-top: 3px;
    font-size: 9px;
  }
`;

const Bars = styled.div`
  flex: 1;
  padding-top: 1px;
`;

const tones = {
  grey: "linear-gradient(#d5d5d5, #d5d5d5)",
  blue: `linear-gradient(${blue}, ${blue})`,
  scale: `linear-gradient(90deg, #5c9900, ${green} 25%, ${yellow} 50%, ${orange} 75%, ${red})`,
};

const Bar = styled.div`
  height: 20px;
  padding-left: 5px;
  line-height: 20px;
  background: ${(p) => tones[p.$tone]} 0 0 / var(--share) 100% no-repeat;
`;

const Rating = styled.div`
  display: flex;
  flex: 1;
  flex-direction: column;
  align-items: center;
  justify-content: flex-end;
  height: 164px;
  padding-bottom: 3px;
  background: ${red};
  color: ${white};
  text-shadow: 1px 1px 2px rgba(0, 0, 0, 0.6);
`;

const RatingLetter = styled.div`
  font-size: 156px;
  line-height: 120px;
`;

const RatingValue = styled.div`
  align-self: flex-end;
  padding-right: 20px;
  font-size: 16px;
  line-height: 20px;
`;

const Levels = styled.div`
  display: grid;
  flex: 1;
  grid-template-columns: 41fr 15fr 15fr 15fr 88fr;
  gap: 3px;
  height: 22px;
  padding-right: 3px;

  b {
    line-height: 22px;
    text-align: right;
    color: ${white};
    background: ${red};
  }
`;

const ScrollTrack = styled.div`
  display: flex;
  flex-direction: column;
  align-items: center;
  gap: 8px;
  width: 17px;
  padding: 6px 1px 5px 2px;
  background: #fcfcfc;
`;

const ScrollThumb = styled.div`
  flex: 1;
  width: 11px;
  margin-bottom: 62px;
  border-radius: 6px;
  background: #8a8a8a;
`;
